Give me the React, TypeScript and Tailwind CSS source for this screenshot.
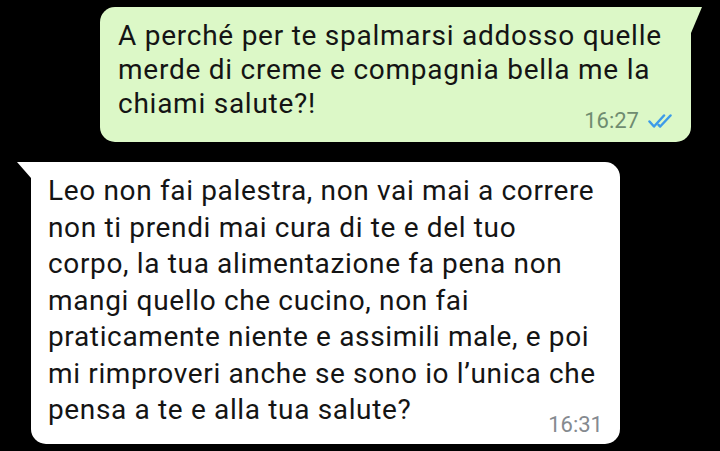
import React from "react";

function DoubleTick() {
  return (
    <svg width="27" height="14" viewBox="0 0 27 14" fill="none" stroke="#3d9be9" strokeWidth="2.5" strokeLinecap="round" strokeLinejoin="round">
      <path d="M1.5 7.5 L6 12.5 L16 1.5" />
      <path d="M10.5 10.8 L12.2 12.5 L22.5 1.5" />
    </svg>
  );
}

export default function App() {
  return (
    <div
      className="w-[720px] h-[451px] bg-black overflow-hidden flex flex-col pt-[7px]"
      style={{ fontFamily: "Roboto, 'Noto Sans', sans-serif" }}
    >
      {/* sent message */}
      <div className="relative ml-[100px] w-[591px] flex flex-col bg-[#dcf8c7] rounded-[15px] rounded-tr-none pl-[18px] pr-[16px] pt-[12px] pb-[11px]">
        <div className="absolute right-[-11px] top-0 w-0 h-0 border-t-[26px] border-t-[#dcf8c7] border-r-[11px] border-r-transparent" />
        <p className="text-[28px] leading-[34px] text-[#141414] tracking-[0.75px]">
          A perché per te spalmarsi addosso quelle
          <br />
          merde di creme e compagnia bella me la
          <br />
          chiami salute?!
        </p>
        <div className="flex justify-end items-center gap-[9px] -mt-[11px]">
          <span className="text-[22px] leading-[21px] text-[#6f8c70]">16:27</span>
          <DoubleTick />
        </div>
      </div>

      {/* received message */}
      <div className="relative ml-[31px] mt-[20px] w-[589px] flex flex-col bg-white rounded-[15px] rounded-tl-none pl-[17px] pr-[17px] pt-[11px] pb-[9px]">
        <div className="absolute left-[-14px] top-0 w-0 h-0 border-t-[16px] border-t-white border-l-[14px] border-l-transparent" />
        <p className="text-[28px] leading-[36.5px] text-[#141414] tracking-[0.65px]">
          Leo non fai palestra, non vai mai a correre
          <br />
          non ti prendi mai cura di te e del tuo
          <br />
          corpo, la tua alimentazione fa pena non
          <br />
          mangi quello che cucino, non fai
          <br />
          praticamente niente e assimili male, e poi
          <br />
          mi rimproveri anche se sono io l’unica che
          <br />
          pensa a te e alla tua salute?
        </p>
        <div className="flex justify-end -mt-[14.5px]">
          <span className="text-[22px] leading-[21px] text-[#858a8f]">16:31</span>
        </div>
      </div>
    </div>
  );
}
